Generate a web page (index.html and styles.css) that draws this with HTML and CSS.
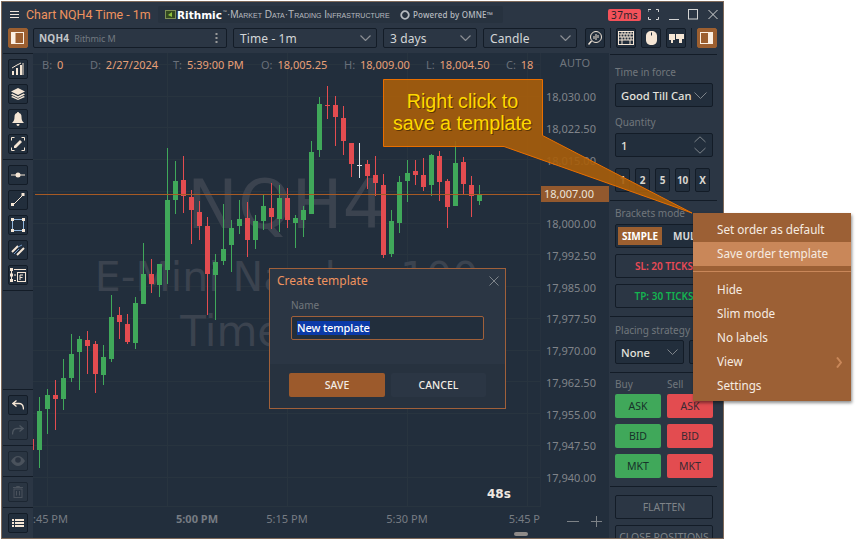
FILE: index.html
```html
<!DOCTYPE html>
<html lang="en">
<head>
<meta charset="utf-8">
<title>Chart NQH4 Time - 1m</title>
<link rel="stylesheet" href="styles.css">
</head>
<body>
<div class="window">
  <header class="titlebar">
    <svg class="burger" width="9" height="8" viewBox="0 0 9 8"><path d="M0 .5h9M0 3.500h9M0 6.500h9" stroke="#f0e6dc" fill="none"/></svg>
    <span class="title">Chart NQH4 Time - 1m</span>
    <div class="brand">
      <svg class="brand-mark" width="11" height="9" viewBox="0 0 11 9"><rect x=".5" y=".5" width="10" height="8" fill="#33491f" stroke="#7d8f55"/><path d="M3 5l4-3v5z" fill="#8fc23f"/></svg>
      <b class="brand-name">Rithmic</b><span class="brand-tm">™</span>
      <span class="brand-tag">·Market Data·Trading Infrastructure</span>
      <svg class="brand-ring" width="10" height="10" viewBox="0 0 10 10"><circle cx="5" cy="5" r="3.800" fill="none" stroke="#b5babf" stroke-width="1.800"/></svg>
      <span class="brand-omne">Powered by OMNE™</span>
    </div>
    <span class="latency">37ms</span>
    <div class="win-ctl">
      <svg width="11" height="11" viewBox="0 0 11 11"><path d="M0 3V.5h3M8 .5h2.500V3M10.500 8v2.500H8M3 10.500H.5V8" fill="none" stroke="#d4d4d4"/></svg>
      <svg width="10" height="11" viewBox="0 0 10 11"><path d="M0 10.500h10" stroke="#d4d4d4"/></svg>
      <svg width="10" height="11" viewBox="0 0 10 11"><rect x=".5" y=".5" width="9" height="9.500" fill="none" stroke="#d4d4d4"/></svg>
      <svg width="10" height="11" viewBox="0 0 10 11"><path d="M.5 1l9 9M9.500 1l-9 9" stroke="#d4d4d4" fill="none"/></svg>
    </div>
  </header>

  <div class="toolbar">
    <button class="btn-ico accent"><svg width="14" height="14" viewBox="0 0 14 14"><rect x=".5" y="1.500" width="12" height="11" fill="#9c5f30" stroke="#fbefe2"/><rect x="1" y="2" width="3.500" height="10" fill="#fbefe2"/></svg></button>
    <div class="combo c-symbol"><b class="sym">NQH4</b><span class="sym-src">Rithmic M</span><svg class="kebab" width="3" height="10" viewBox="0 0 3 10"><path d="M.5 0h2v2h-2zM.5 4h2v2h-2zM.5 8h2v2h-2z" fill="#9a9a9a"/></svg></div>
    <div class="combo c-time">Time - 1m<svg class="chev" width="11" height="6" viewBox="0 0 11 6"><path d="M.5.5l5 5 5-5" fill="none" stroke="#8b8f94" stroke-width="1.200"/></svg></div>
    <div class="combo c-range">3 days<svg class="chev" width="11" height="6" viewBox="0 0 11 6"><path d="M.5.5l5 5 5-5" fill="none" stroke="#8b8f94" stroke-width="1.200"/></svg></div>
    <div class="combo c-range">Candle<svg class="chev" width="11" height="6" viewBox="0 0 11 6"><path d="M.5.5l5 5 5-5" fill="none" stroke="#8b8f94" stroke-width="1.200"/></svg></div>
    <button class="btn-ico b-search"><svg width="16" height="16" viewBox="0 0 16 16"><circle cx="9" cy="7" r="5.500" fill="none" stroke="#f0e4d6"/><path d="M4.500 11L1.500 14.500" stroke="#f0e4d6" stroke-width="1.500"/><path d="M7 6v3M9 4v6M11 5v3" stroke="#f0e4d6"/></svg></button>
    <i class="tb-div"></i>
    <button class="btn-ico"><svg width="16" height="14" viewBox="0 0 16 14"><rect x=".5" y=".5" width="15" height="13" fill="none" stroke="#f5e6d5"/><path d="M1 3h14M1 6h14M1 9h14M4 1v2M7 1v2M10 1v2M13 1v2M3 3v3M6 3v3M9 3v3M12 3v3M4 6v3M7 6v3M10 6v3M13 6v3M4 9v4M12 9v4" stroke="#f5e6d5" fill="none"/></svg></button>
    <button class="btn-ico"><svg width="11" height="14" viewBox="0 0 11 14"><path d="M5.500 0C2 0 0 2 0 5v4c0 3 2 5 5.500 5S11 12 11 9V5c0-3-2-5-5.500-5z" fill="#f5e6d5"/><path d="M5.500 1.500v3" stroke="#222e3c"/></svg></button>
    <button class="btn-ico"><svg width="15" height="11" viewBox="0 0 15 11"><path d="M0 1h6v6H4v3H2V7H0zM7 1h8v5h-2v4h-3V6H7z" fill="#f5e6d5"/></svg></button>
    <i class="tb-div"></i>
    <button class="btn-ico accent"><svg width="14" height="14" viewBox="0 0 14 14"><rect x=".5" y="1.500" width="12" height="11" fill="#9c5f30" stroke="#fbefe2"/><rect x="8" y="2" width="4.500" height="10" fill="#fbefe2"/></svg></button>
  </div>

  <main class="workspace">
    <nav class="sidebar">
      <div class="side-group">
        <button class="btn-ico"><svg width="14" height="14" viewBox="0 0 14 14"><path d="M1 9h2v4H1zM5 6h2v7H5zM9 3h2v10H9z" fill="#f5e6d5"/><path d="M12 1v12" stroke="#f5e6d5"/><path d="M1 6l5-3 4-2" stroke="#f5e6d5" fill="none"/></svg></button>
        <button class="btn-ico"><svg width="14" height="12" viewBox="0 0 14 12"><path d="M7 0l7 3.500-7 3.500-7-3.500z" fill="#f5e6d5"/><path d="M1.500 5.500L7 8.200l5.500-2.700L14 6.500 7 10 0 6.500zM1.500 8L7 10.700 12.500 8 14 9l-7 3-7-3z" fill="#f5e6d5"/></svg></button>
        <button class="btn-ico"><svg width="12" height="14" viewBox="0 0 12 14"><path d="M6 0c.7 0 1 .5 1 1 2 .5 2.500 2 2.500 4 0 3 .8 4.500 2.500 6H0c1.700-1.500 2.500-3 2.500-6 0-2 .5-3.500 2.500-4 0-.5.3-1 1-1zM4.500 12h3c0 1-.6 2-1.500 2s-1.500-1-1.500-2z" fill="#f5e6d5"/></svg></button>
        <button class="btn-ico"><svg width="14" height="14" viewBox="0 0 14 14"><path d="M.5 3.500v-3h3M13.500 10.500v3h-3M.5 10.500v3h3M13.500 3.500v-3h-3" fill="none" stroke="#f5e6d5"/><path d="M3 9l6-6 2 2-6 6H3z" fill="#f5e6d5"/></svg></button>
      </div>
      <div class="side-group">
        <button class="btn-ico"><svg width="14" height="6" viewBox="0 0 14 6"><path d="M0 3h14" stroke="#f5e6d5"/><circle cx="7" cy="3" r="2.500" fill="#f5e6d5"/></svg></button>
        <button class="btn-ico"><svg width="14" height="14" viewBox="0 0 14 14"><path d="M2 12L12 2" stroke="#f5e6d5" fill="none"/><rect x="0" y="10" width="3" height="3" fill="#f5e6d5"/><rect x="10.500" y="0" width="3" height="3" fill="#f5e6d5"/></svg></button>
        <button class="btn-ico"><svg width="14" height="14" viewBox="0 0 14 14"><rect x="1.500" y="1.500" width="11" height="11" fill="none" stroke="#8fb3d9"/><path d="M0 0h3v3H0zM11 0h3v3h-3zM0 11h3v3H0zM11 11h3v3h-3z" fill="#f5e6d5"/></svg></button>
        <button class="btn-ico"><svg width="14" height="12" viewBox="0 0 14 12"><path d="M1 8l6-6M6 11l7-7" stroke="#f5e6d5" stroke-width="2" fill="none"/><path d="M3 10l5-5M7 3l4-2" stroke="#6f96c4" fill="none"/></svg></button>
        <button class="btn-ico"><svg width="16" height="14" viewBox="0 0 16 14"><path d="M0 0h3v3H0zM0 5.500h3v3H0zM0 11h3v3H0z" fill="#f5e6d5"/><path d="M1.500 3v8M4 1.500h12M4 7h2M4 12.500h2" stroke="#f5e6d5"/><rect x="7.500" y="4.500" width="8" height="9" fill="none" stroke="#f5e6d5"/><path d="M10 7h3M10 7v5M10 9.500h2.500" stroke="#f5e6d5"/></svg></button>
      </div>
      <div class="side-fill"></div>
      <div class="side-group">
        <button class="btn-ico"><svg width="12" height="10" viewBox="0 0 12 10"><path d="M4.500.5L.8 3.500l3.700 3M1 3.500h6c3 0 4.500 2 4.500 6" fill="none" stroke="#f5e6d5" stroke-width="1.300"/></svg></button>
        <button class="btn-ico dim"><svg width="12" height="10" viewBox="0 0 12 10"><path d="M7.500.5l3.700 3-3.700 3M11 3.500H5c-3 0-4.500 2-4.500 6" fill="none" stroke="#4e5761" stroke-width="1.300"/></svg></button>
      </div>
      <div class="side-group">
        <button class="btn-ico dim"><svg width="14" height="10" viewBox="0 0 14 10"><path d="M0 5c2-3.500 4.500-5 7-5s5 1.500 7 5c-2 3.500-4.500 5-7 5S2 8.500 0 5z" fill="#4a525c"/><circle cx="7" cy="4" r="2.800" fill="#2a3340"/></svg></button>
      </div>
      <div class="side-group">
        <button class="btn-ico dim"><svg width="10" height="12" viewBox="0 0 10 12"><path d="M0 1.500h10M3.500 1.500V.5h3v1" stroke="#4a525c" fill="none"/><rect x="1" y="3" width="8" height="8.500" fill="none" stroke="#4a525c"/><path d="M3.500 5v4.500M6.500 5v4.500" stroke="#4a525c"/></svg></button>
      </div>
      <div class="side-group">
        <button class="btn-ico"><svg width="12" height="10" viewBox="0 0 12 10"><path d="M0 1h2v2H0zM3 1h9v2H3zM0 4h2v2H0zM3 4h9v2H3zM0 7h2v2H0zM3 7h9v2H3z" fill="#f5e6d5"/></svg></button>
      </div>
    </nav>

    <section class="chart">
      <div class="plot">
        <svg class="plot-svg" width="507" height="454" viewBox="33 53 507 454">
          <path class="grid" d="M47.500 53V507M167.500 53V507M287.500 53V507M407.500 53V507M527.500 53V507M33 64.500H540M33 96.500H540M33 127.500H540M33 159.500H540M33 191.500H540M33 223.500H540M33 254.500H540M33 286.500H540M33 318.500H540M33 350.500H540M33 381.500H540M33 413.500H540M33 445.500H540M33 477.500H540M33 506.500H540"/>
        </svg>
        <div class="watermark">
          <div class="wm-sym">NQH4</div>
          <div class="wm-name">E-Mini Nasdaq 100</div>
          <div class="wm-time">Time - 1m</div>
        </div>
        <svg class="plot-svg" width="507" height="454" viewBox="33 53 507 454">
          <path class="wick-g" d="M39.500 397V468M47.500 389V434M63.500 359V410M71.500 334V382M79.500 336V390M103.500 345V385M111.500 295V362M135.500 297V349M143.500 243V304M159.500 264V297M167.500 148V284M175.500 161V214M215.500 254V320M223.500 204V265M231.500 220V272M239.500 200V234M255.500 215V249M263.500 195V230M279.500 185V232M295.500 215V248M303.500 206V237M311.500 141V214M319.500 97V157M391.500 210V257M399.500 176V233M407.500 160V202M431.500 154V196M455.500 141V206M479.500 185V205"/>
          <path class="wick-r" d="M55.500 380V430M87.500 331V374M95.500 341V393M119.500 307V339M127.500 314V344M151.500 259V293M183.500 156V213M191.500 190V244M199.500 201V240M207.500 217V315M247.500 202V257M271.500 183V229M287.500 188V228M327.500 86V119M335.500 96V146M343.500 106V155M351.500 143V177M367.500 160V189M375.500 156V196M383.500 174V258M415.500 160V185M423.500 158V191M439.500 151V201M447.500 179V228M463.500 157V194M471.500 176V217"/>
          <path class="body-g" d="M37 411h5v39h-5zM45 395h5v14h-5zM61 378h5v21h-5zM69 354h5v24h-5zM77 339h5v13h-5zM101 357h5v18h-5zM109 317h5v42h-5zM133 303h5v40h-5zM141 274h5v30h-5zM157 264h5v21h-5zM165 200h5v70h-5zM173 181h5v19h-5zM213 262h5v13h-5zM221 249h5v12h-5zM229 228h5v17h-5zM237 219h5v7h-5zM253 221h5v19h-5zM261 206h5v15h-5zM277 198h5v21h-5zM293 218h5v5h-5zM301 210h5v10h-5zM309 152h5v62h-5zM317 104h5v46h-5zM389 221h5v33h-5zM397 182h5v41h-5zM405 173h5v8h-5zM429 155h5v30h-5zM453 163h5v43h-5zM477 195h5v6h-5z"/>
          <path class="body-r" d="M33 439h1v11h-1zM53 395h5v4h-5zM85 340h5v6h-5zM93 344h5v30h-5zM117 315h5v7h-5zM125 324h5v18h-5zM149 274h5v10h-5zM181 180h5v16h-5zM189 197h5v13h-5zM197 212h5v14h-5zM205 226h5v48h-5zM245 218h5v22h-5zM269 208h5v9h-5zM285 198h5v22h-5zM325 105h5v1h-5zM333 105h5v12h-5zM341 118h5v23h-5zM349 143h5v21h-5zM365 164h5v12h-5zM373 175h5v8h-5zM381 185h5v70h-5zM413 171h5v4h-5zM421 175h5v12h-5zM437 156h5v26h-5zM445 181h5v26h-5zM461 162h5v22h-5zM469 185h5v11h-5z"/>
          <path class="doji" d="M359.500 143V178M357 165.500h5"/>
          <path class="last-line" d="M35 194.500H540"/>
        </svg>
        <div class="ohlc">
          <span><i>B:</i> 0</span>
          <span><i>D:</i> 2/27/2024</span>
          <span><i>T:</i> 5:39:00 PM</span>
          <span><i>O:</i> 18,005.25</span>
          <span><i>H:</i> 18,009.00</span>
          <span><i>L:</i> 18,004.50</span>
          <span><i>C:</i> 18</span>
        </div>
        <div class="countdown">48s</div>
      </div>
      <div class="price-axis">
        <div class="auto">AUTO</div>
        <div class="price">18,030.00</div>
        <div class="price">18,022.50</div>
        <div class="price">18,015.00</div>
        <div class="price"><span class="price-tag">18,007.00</span></div>
        <div class="price">18,000.00</div>
        <div class="price">17,992.50</div>
        <div class="price">17,985.00</div>
        <div class="price">17,977.50</div>
        <div class="price">17,970.00</div>
        <div class="price">17,962.50</div>
        <div class="price">17,955.00</div>
        <div class="price">17,947.50</div>
        <div class="price">17,940.00</div>
      </div>
      <div class="time-axis">
        <span class="tick t1">:45 PM</span>
        <span class="tick t2">5:00 PM</span>
        <span class="tick t3">5:15 PM</span>
        <span class="tick t4">5:30 PM</span>
        <span class="tick t5">5:45 P</span>
      </div>
      <div class="zoom-ctl">
        <svg width="12" height="1" viewBox="0 0 12 1"><path d="M0 .5h12" stroke="#7d8287"/></svg>
        <svg width="11" height="11" viewBox="0 0 11 11"><path d="M0 5.500h11M5.500 0v11" stroke="#7d8287"/></svg>
      </div>
    </section>

    <aside class="panel">
      <div class="sec s-first">
        <label class="lbl">Time in force</label>
        <div class="field sel">Good Till Can<svg class="chev" width="13" height="7" viewBox="0 0 13 7"><path d="M.5.5l6 6 6-6" fill="none" stroke="#7e848a"/></svg></div>
        <label class="lbl l-qty">Quantity</label>
        <div class="field sel">1<svg class="spin" width="12" height="18" viewBox="0 0 12 18"><path d="M.5 6L6 .8 11.500 6M.5 12L6 17.200 11.500 12" fill="none" stroke="#7e848a"/></svg></div>
        <div class="quick"><span>1</span><span>2</span><span>5</span><span>10</span><span>X</span></div>
      </div>
      <div class="sec s-brackets">
        <label class="lbl">Brackets mode</label>
        <div class="segment"><span class="seg-on">SIMPLE</span><span class="seg-off">MULTI</span></div>
        <div class="field bracket sl">SL: 20 TICKS</div>
        <div class="field bracket tp">TP: 30 TICKS</div>
      </div>
      <div class="sec s-strategy">
        <label class="lbl">Placing strategy</label>
        <div class="strategy">
          <div class="field sel s-none">None<svg class="chev" width="11" height="6" viewBox="0 0 11 6"><path d="M.5.5l5 5 5-5" fill="none" stroke="#7e848a"/></svg></div>
          <div class="field s-rest"></div>
        </div>
      </div>
      <div class="sec s-orders">
        <div class="buy-sell"><label class="lbl">Buy</label><label class="lbl">Sell</label></div>
        <div class="orders">
          <span class="buy">ASK</span><span class="sell">ASK</span>
          <span class="buy">BID</span><span class="sell">BID</span>
          <span class="buy">MKT</span><span class="sell">MKT</span>
        </div>
      </div>
      <div class="sec s-flatten">
        <div class="field action">FLATTEN</div>
        <div class="field action">CLOSE POSITIONS</div>
      </div>
    </aside>
  </main>

  <div class="callout">
    <svg class="callout-shape" width="312" height="137" viewBox="383 78 312 137"><path d="M383.500 79.500H542.500V135.500L692 213 504 146.500H383.500Z"/></svg>
    <div class="callout-text">Right click to<br>save a template</div>
  </div>

  <div class="dialog">
    <div class="dialog-head"><span class="dialog-title">Create template</span><svg width="10" height="10" viewBox="0 0 10 10"><path d="M.5.5l9 9M9.500.5l-9 9" stroke="#7e848a" fill="none"/></svg></div>
    <div class="dialog-body">
      <label class="lbl">Name</label>
      <div class="name-input"><span class="selected">New template</span></div>
    </div>
    <div class="dialog-foot"><span class="d-btn save">SAVE</span><span class="d-btn cancel">CANCEL</span></div>
  </div>

  <div class="menu">
    <div class="m-item">Set order as default</div>
    <div class="m-item hot">Save order template</div>
    <div class="m-sep"></div>
    <div class="m-item">Hide</div>
    <div class="m-item">Slim mode</div>
    <div class="m-item">No labels</div>
    <div class="m-item">View<svg class="m-arrow" width="6" height="11" viewBox="0 0 6 11"><path d="M1 .5l4 5-4 5" fill="none" stroke="#c98759" stroke-width="2"/></svg></div>
    <div class="m-item">Settings</div>
  </div>

  <div class="scroll-handle"></div>
</div>
</body>
</html>
```

FILE: styles.css
```css
* { box-sizing: border-box; }
html, body { margin: 0; background: #fff; overflow: hidden; }
body { font-family: "Noto Sans", sans-serif; color: #d9d9d9; width: 857px; height: 540px; }
i { font-style: normal; }

.window {
  position: relative;
  width: 723px; height: 538px;
  margin: 1px 0 0 1px;
  background: #2b3644;
  border: 1px solid #7f6a5a;
  display: flex; flex-direction: column;
}

/* title bar */
.titlebar { height: 25px; display: flex; align-items: center; padding-left: 8px; flex: none; }
.burger { margin-right: 7px; flex: none; }
.title { font: 12.400px Roboto, sans-serif; color: #ef935f; width: 132px; white-space: nowrap; flex: none; }
.brand {
  width: 345px; height: 17px; background: #27323f; border-radius: 2px; flex: none;
  display: flex; align-items: center; padding-left: 7px; margin-right: 105px; white-space: nowrap; overflow: hidden;
}
.brand-mark { margin-right: 1px; flex: none; }
.brand-name { font: bold 10.500px "DejaVu Sans", sans-serif; color: #fff; width: 46px; flex: none; }
.brand-tm { font-size: 5px; color: #aaa; margin-bottom: 5px; }
.brand-tag { font: 10px "Liberation Sans", sans-serif; font-variant: small-caps; color: #b8bcc0; width: 173px; letter-spacing: .02px; flex: none; }
.brand-ring { margin: 0 3px 0 0; flex: none; }
.brand-omne { font-size: 8px; font-weight: 500; color: #b8bcc0; letter-spacing: .2px; }
.latency { width: 33px; height: 12px; background: #f4525a; border-radius: 2px; color: #28222a; font-size: 10px; line-height: 12px; text-align: center; letter-spacing: .3px; flex: none; }
.win-ctl { display: flex; gap: 9.500px; margin-left: 7px; align-items: center; }

/* toolbar */
.toolbar { height: 26px; display: flex; align-items: flex-start; gap: 5px; padding: 1px 0 0 6px; flex: none; }
.btn-ico {
  width: 20px; height: 20px; padding: 0; flex: none;
  background: #222e3c; border: 1px solid #131c27; border-radius: 2px;
  display: flex; align-items: center; justify-content: center;
}
.btn-ico.accent { background: #9c5f30; border-color: #9c5f30; }
.btn-ico.dim { background: #2a3542; border-color: #1c2632; }
.combo {
  height: 20px; background: #2b3644; border: 1px solid #131c27; border-radius: 2px;
  display: flex; align-items: center; padding: 0 5px 0 6px; font-size: 12px; letter-spacing: .1px; color: #d4d6d8; position: relative; flex: none; white-space: nowrap;
}
.c-symbol { width: 194px; padding-left: 5px; }
.c-time { width: 144px; margin-left: 1px; }
.c-range { width: 94px; margin-left: 1px; }
.b-search { margin-left: 3px; }
.chev { margin-left: auto; flex: none; }
.sym { font-size: 10px; color: #c3c6c9; letter-spacing: .2px; }
.sym-src { font-size: 9px; color: #727980; margin-left: 5px; letter-spacing: -.1px; }
.kebab { margin-left: auto; margin-right: 3px; }
.tb-div { width: 1px; height: 20px; background: #131c27; flex: none; }

/* workspace */
.workspace { flex: 1; min-height: 0; display: flex; }
.sidebar { width: 31px; flex: none; display: flex; flex-direction: column; padding-left: 1px; }
.side-group { display: flex; flex-direction: column; gap: 5px; padding: 5px 0 5px 5px; border-top: 1px solid #131c27; }
.side-fill { flex: 1; border-top: 1px solid #131c27; }

/* chart */
.chart { width: 576px; flex: none; display: grid; grid-template-columns: 507px 69px; grid-template-rows: 454px 31px; background: #222e3c; }
.plot { position: relative; overflow: hidden; }
.plot-svg { position: absolute; left: 0; top: 0; }
.grid { stroke: #28343f; fill: none; }
.wick-g { stroke: #40a85a; fill: none; }
.wick-r { stroke: #e34c50; fill: none; }
.body-g { fill: #40a85a; }
.body-r { fill: #e34c50; }
.doji { stroke: #dfe3e6; fill: none; }
.last-line { stroke: #a75a24; fill: none; }

.watermark { position: absolute; left: 0; top: 0; width: 507px; text-align: center; font-family: "DejaVu Sans", sans-serif; color: #3b434f; white-space: nowrap; }
.wm-sym { font-size: 68px; line-height: 76px; margin-top: 114px; }
.wm-name { font-size: 41px; line-height: 46px; margin-top: 11px; }
.wm-time { font-size: 42px; line-height: 46px; margin-top: 9px; }

.ohlc {
  position: relative; height: 24px; padding: 4px 0 0 9px;
  display: grid; grid-template-columns: 48px 83px 88px 83px 82px 80px 30px;
  font-size: 11px; line-height: 16px; color: #e8a078; white-space: nowrap;
}
.ohlc i { color: #69707a; margin-right: 2px; }
.countdown { position: absolute; left: 454px; top: 434px; font: bold 12px "DejaVu Sans", sans-serif; color: #efe8e0; }

.price-axis { overflow: hidden; position: relative; border-left: 1px solid #27323f; }
.auto { height: 28px; line-height: 20px; text-align: center; font-size: 11px; color: #6f757c; letter-spacing: .2px; }
.price { height: 31.750px; line-height: 31.750px; font-size: 11px; color: #80848a; padding-left: 5px; position: relative; }
.price-tag { position: absolute; left: -1px; top: 10px; width: 69px; height: 16px; line-height: 16px; background: #93592e; color: #ece4da; padding-left: 4px; }

.time-axis { display: flex; overflow: hidden; height: 31px; align-items: flex-start; padding-top: 4px; font-size: 11px; color: #777c83; }
.tick { width: 60px; flex: none; text-align: center; line-height: 16px; white-space: nowrap; }
.t1 { margin-left: -16px; text-align: right; width: 51px; }
.t2 { margin-left: 99px; font-weight: 700; }
.t3 { margin-left: 30px; }
.t4 { margin-left: 60px; }
.t5 { margin-left: 60px; width: 43px; text-align: right; }
.zoom-ctl { display: flex; align-items: center; gap: 12px; padding: 0 0 3px 27px; height: 31px; }

/* right panel */
.panel { width: 114px; flex: none; padding: 0 6px 0 1px; overflow: hidden; font-size: 12px; }
.sec { padding: 0 4px 0 5px; border-top: 1px solid #131c27; }
.lbl { display: block; font-size: 10px; line-height: 14px; color: #71767c; white-space: nowrap; }
.s-first { margin-top: 1px; padding-top: 10px; height: 146px; }
.field { height: 24px; background: #222e3c; border: 1px solid #131c27; border-radius: 2px; display: flex; align-items: center; padding: 0 5px; }
.lbl + .field { margin-top: 4px; }
.sel { font-size: 11.200px; font-weight: 500; color: #e4e2dd; white-space: nowrap; }
.l-qty { margin-top: 8px; }
.spin { margin-left: auto; margin-right: 1px; flex: none; }
.quick { display: flex; gap: 5px; margin-top: 11px; }
.quick span { width: 15px; height: 24px; background: #222e3c; border: 1px solid #131c27; border-radius: 2px; font-size: 10px; font-weight: 700; line-height: 22px; text-align: center; color: #d8d6d0; flex: none; letter-spacing: -.3px; }
.s-brackets { padding-top: 5px; height: 116px; }
.segment { display: flex; height: 24px; margin-top: 4px; background: #222e3c; border: 1px solid #131c27; border-radius: 2px; align-items: center; padding-left: 2px; font-size: 10px; font-weight: 700; white-space: nowrap; overflow: hidden; }
.seg-on { background: #9c5f30; color: #fff; height: 18px; line-height: 18px; width: 44px; text-align: center; flex: none; }
.seg-off { color: #d7d7d7; margin-left: 11px; }
.bracket { justify-content: center; margin-top: 6px; font-size: 10px; font-weight: 600; background: #2b3644; white-space: nowrap; }
.sl { color: #e94a55; }
.tp { color: #14b350; }
.s-strategy { padding-top: 6px; height: 56px; }
.strategy { display: flex; gap: 5px; margin-top: 3px; }
.s-none { width: 69px; flex: none; margin: 0; }
.s-rest { flex: 1; }
.s-orders { padding-top: 4px; height: 114px; }
.buy-sell { display: grid; grid-template-columns: 52px 46px; height: 14px; margin-bottom: 3px; }
.orders { display: grid; grid-template-columns: 46px 46px; gap: 6px; }
.orders span { height: 24px; border-radius: 2px; font-size: 10.500px; line-height: 24px; text-align: center; }
.buy { background: #40a85a; color: #17322a; }
.sell { background: #e34c50; color: #3a2a33; }
.s-flatten { padding-top: 8px; }
.action { justify-content: center; background: #2b3644; font-size: 10.500px; color: #7e8388; margin-bottom: 6px; white-space: nowrap; padding: 0; overflow: hidden; }

/* overlays */
.callout { position: absolute; left: 381px; top: 76px; width: 161px; height: 69px; }
.callout-shape { position: absolute; left: 0; top: 0; overflow: visible; }
.callout-shape path { fill: rgba(168, 94, 10, .9); stroke: #e86f00; stroke-width: 1; }
.callout-text { position: relative; font: 19.700px/22px "Liberation Sans", sans-serif; color: #ffd800; text-align: center; padding: 12px 2px 0 0; text-shadow: 1px 1px 0 #5c3605; }

.dialog { position: absolute; left: 267px; top: 266px; width: 237px; height: 141px; background: #2b3644; border: 1px solid #a0603a; display: flex; flex-direction: column; }
.dialog-head { height: 23px; display: flex; align-items: center; justify-content: space-between; padding: 0 6px 0 7px; }
.dialog-title { font-size: 12px; color: #ef935f; }
.dialog-body { padding: 6px 21px 0; flex: 1; }
.name-input { margin-top: 4px; height: 24px; background: #222e3c; border: 1px solid #a0603a; border-radius: 2px; padding-left: 5px; display: flex; align-items: center; font-size: 11px; font-weight: 500; letter-spacing: -.1px; }
.selected { background: #0b3aa8; color: #fff; line-height: 14px; }
.dialog-foot { height: 44px; background: #27323f; display: flex; gap: 6px; padding: 9px 0 0 19px; flex: none; }
.d-btn { width: 96px; height: 24px; border-radius: 2px; font-size: 10.500px; font-weight: 500; line-height: 24px; text-align: center; color: #f2ece4; }
.save { background: #9c5a2c; }
.cancel { background: #2b3644; width: 95px; }

.menu { position: absolute; left: 691px; top: 211px; width: 158px; height: 188px; padding-top: 5px; background: #9c6035; box-shadow: 1px 2px 3px rgba(0,0,0,.45); }
.m-item { height: 24px; line-height: 22px; padding-left: 24px; font-size: 11.700px; color: #f6ece2; position: relative; white-space: nowrap; }
.m-item.hot { background: #c98759; }
.m-sep { height: 1px; background: #c98759; margin: 5px 0 6px; }
.m-arrow { position: absolute; right: 9px; top: 7px; }

.scroll-handle { position: absolute; left: 512px; top: 530px; width: 14px; height: 4px; border-radius: 2px; background: #8e8a88; }
```
